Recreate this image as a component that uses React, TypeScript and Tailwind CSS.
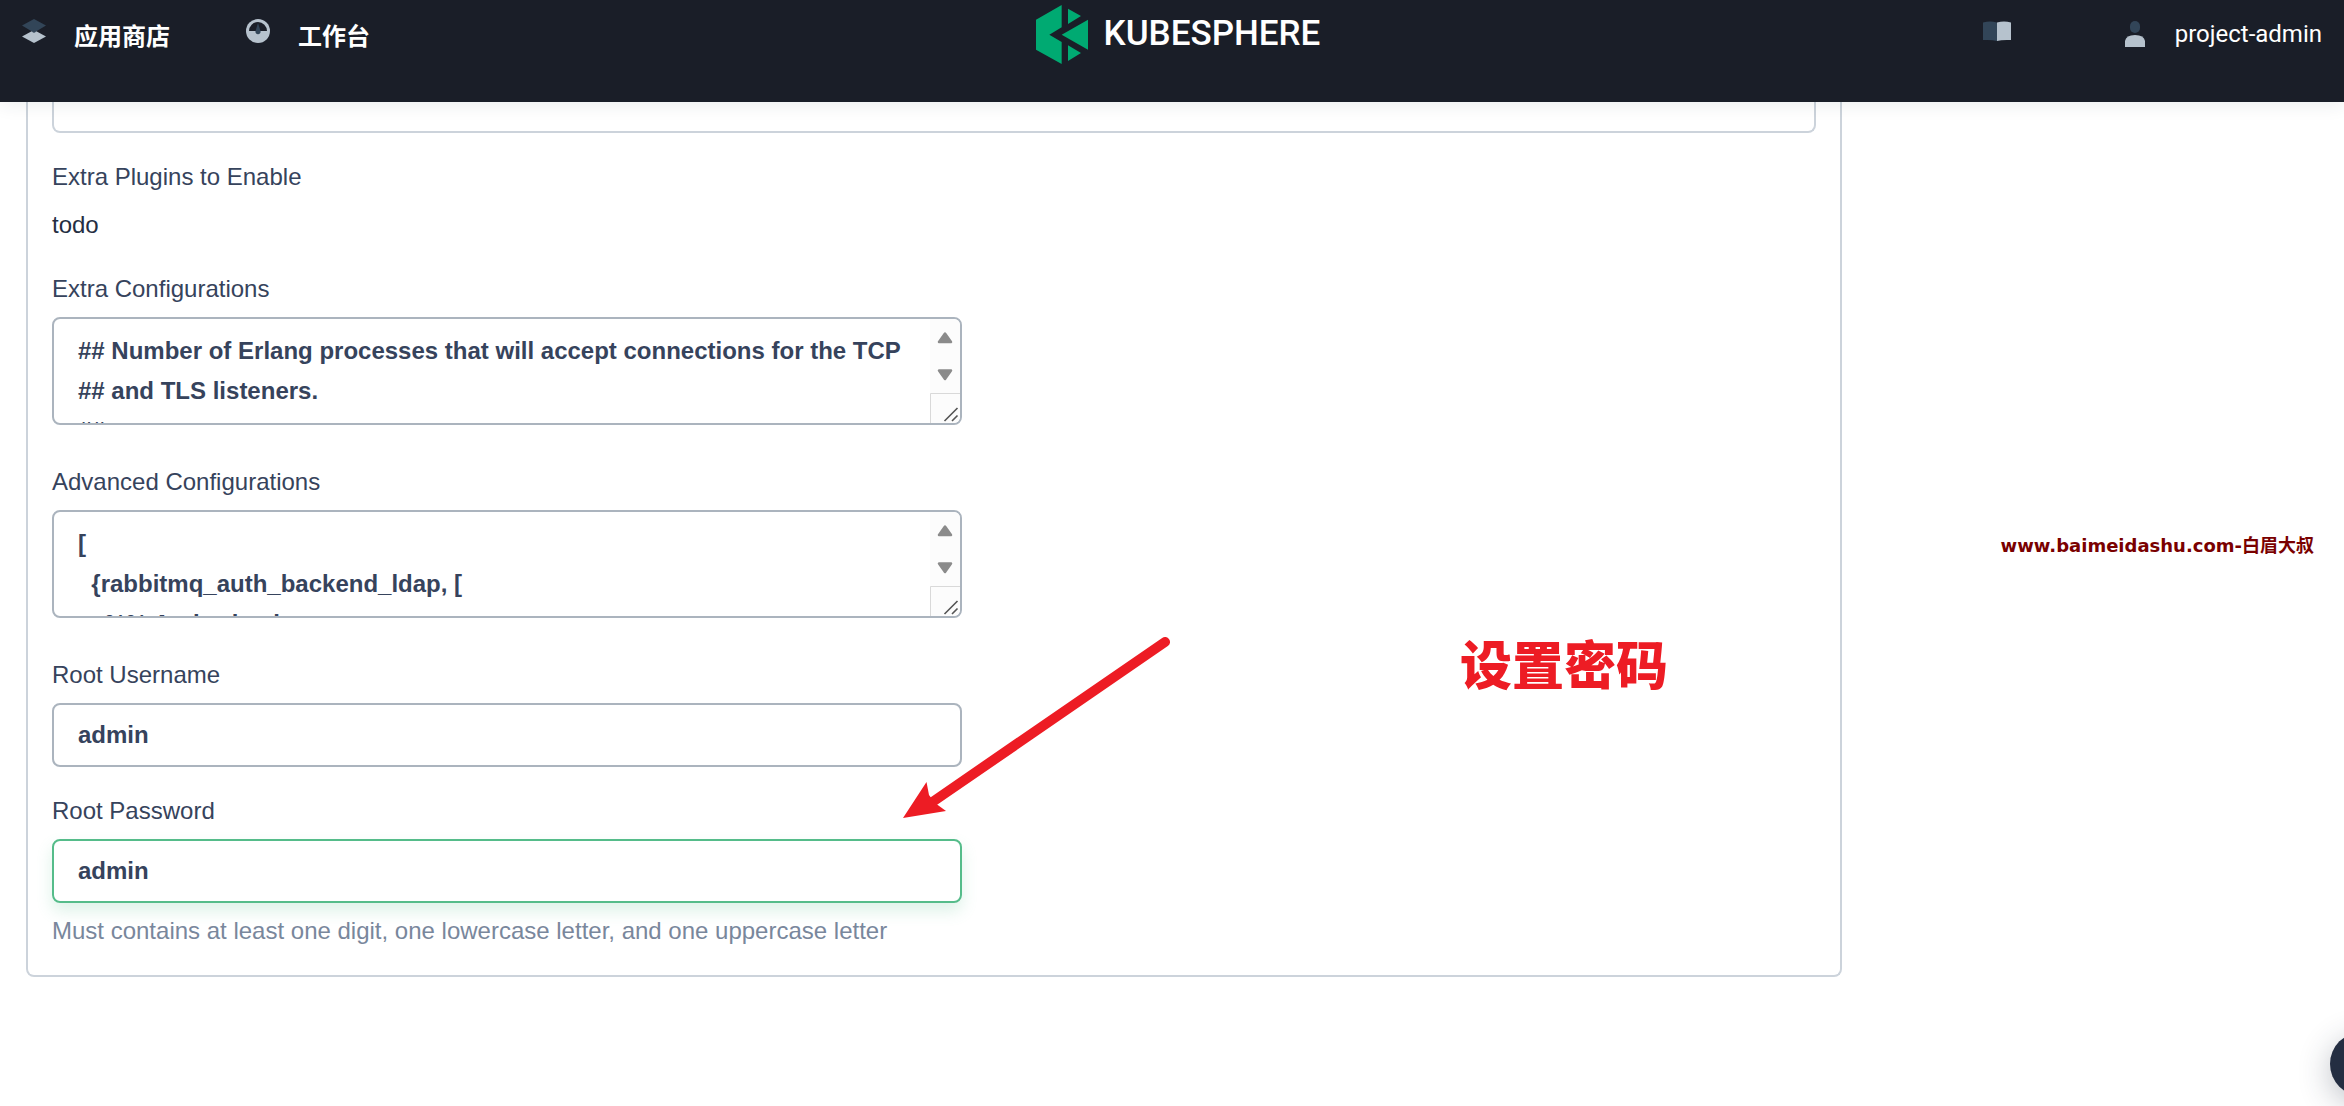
import { useState } from "react";
import type { ReactNode } from "react";

const EXTRA_CONFIG = `## Number of Erlang processes that will accept connections for the TCP
## and TLS listeners.
##`;

const ADVANCED_CONFIG = `[
  {rabbitmq_auth_backend_ldap, [
    %% Authorisation`;

export default function App() {
  return (
    <div className="relative min-h-screen overflow-hidden bg-white font-['Liberation_Sans','Noto_Sans_CJK_SC',sans-serif] text-2xl leading-10 text-[#36435c]">
      <Header />
      <main className="px-[26px]">
        <SettingsPanel />
      </main>
      <Annotations />
      <button aria-label="Toolbox" className="fixed -right-[50px] bottom-[10px] h-16 w-16 rounded-full bg-[#242e42] shadow-[0_8px_32px_rgba(36,46,66,0.3)]" />
    </div>
  );
}

function Header() {
  return (
    <header className="relative z-10 grid h-[102px] grid-cols-[1fr_auto_1fr] items-start bg-[#1a1e28] px-[22px] text-white shadow-[0_4px_16px_rgba(36,46,66,0.08)]">
      <nav className="flex gap-[76px] pt-[15px] font-['Noto_Sans_CJK_SC',sans-serif] font-bold">
        <a href="#apps" className="flex gap-7">
          <LayersIcon />
          应用商店
        </a>
        <a href="#workbench" className="flex gap-7">
          <GaugeIcon />
          工作台
        </a>
      </nav>
      <a href="#home" aria-label="KubeSphere" className="flex items-center gap-4 pt-1 pl-3">
        <LogoMark />
        <span className="font-['Roboto',sans-serif] text-[35px] leading-[60px] font-medium">KUBESPHERE</span>
      </a>
      <div className="flex justify-end gap-[114px] pt-3.5">
        <a href="#docs" aria-label="Documentation" className="pt-[7px]">
          <BookIcon />
        </a>
        <button className="flex gap-[30px] font-['Roboto',sans-serif]">
          <UserIcon />
          project-admin
        </button>
      </div>
    </header>
  );
}

function SettingsPanel() {
  const [username, setUsername] = useState("admin");
  const [password, setPassword] = useState("admin");

  return (
    <form className="max-w-[1816px] rounded-b-lg border-2 border-t-0 border-[#ccd3db] px-6 pb-6">
      <div className="h-[31px] rounded-b-lg border-2 border-t-0 border-[#ccd3db]" />
      <div className="mt-6 flex max-w-[910px] flex-col gap-6">
        <div className="flex flex-col gap-2">
          <div>Extra Plugins to Enable</div>
          <div className="text-[#242e42]">todo</div>
        </div>
        <Field id="extra" label="Extra Configurations">
          <CodeArea id="extra" value={EXTRA_CONFIG} />
        </Field>
        <Field id="advanced" label="Advanced Configurations">
          <CodeArea id="advanced" value={ADVANCED_CONFIG} />
        </Field>
        <Field id="username" label="Root Username">
          <input
            id="username"
            value={username}
            onChange={(e) => setUsername(e.target.value)}
            className="h-16 w-full rounded-lg border-2 border-[#abb4be] px-6 font-bold outline-none"
          />
        </Field>
        <Field id="password" label="Root Password">
          <input
            id="password"
            value={password}
            onChange={(e) => setPassword(e.target.value)}
            className="h-16 w-full rounded-lg border-2 border-[#55bc8a] px-6 font-bold shadow-[0_8px_16px_rgba(85,188,138,0.2)] outline-none"
          />
          <p className="relative text-[#79879c]">Must contains at least one digit, one lowercase letter, and one uppercase letter</p>
        </Field>
      </div>
    </form>
  );
}

function Field({ id, label, children }: { id: string; label: string; children: ReactNode }) {
  return (
    <div className="flex flex-col gap-2">
      <label htmlFor={id}>{label}</label>
      {children}
    </div>
  );
}

function CodeArea({ id, value }: { id: string; value: string }) {
  return (
    <div className="mb-[13px] flex h-[108px] overflow-hidden rounded-lg border-2 border-[#abb4be]">
      <textarea
        id={id}
        defaultValue={value}
        className="min-w-0 flex-1 resize-none py-3 pl-6 font-bold whitespace-pre outline-none [scrollbar-width:none]"
      />
      <svg viewBox="0 0 30 104" className="h-[104px] w-[30px] shrink-0">
        <rect width="30" height="104" fill="#fcfcfc" />
        <path d="M15 14.5 21 23H9z M9 51.5h12L15 60z" fill="#8b8b8b" stroke="#8b8b8b" strokeWidth="2.5" strokeLinejoin="round" />
        <path d="M.5 104V74.5H30" fill="none" stroke="#d9d9d9" />
        <path d="M14.500 102 27.500 89M22 102l5.500-5.500" stroke="#555" strokeWidth="1.6" />
      </svg>
    </div>
  );
}

// Red notes drawn over the page
function Annotations() {
  return (
    <>
      <svg viewBox="0 0 270 184" className="absolute top-[635px] left-[902px] z-20 h-[184px] w-[270px]" fill="#ed1c24">
        <path d="M263 7 29 168" stroke="#ed1c24" strokeWidth="10" strokeLinecap="round" />
        <path d="M1 183 24.500 147 27 160 33 168 44 176z" />
      </svg>
      <div className="absolute top-[637px] left-[1460px] font-['Noto_Sans_CJK_SC',sans-serif] text-[52px] leading-[52px] font-black text-[#ed1c24]">设置密码</div>
      <div className="absolute top-[526px] right-[30px] font-['DejaVu_Sans','Noto_Sans_CJK_SC',sans-serif] text-[18px] font-bold whitespace-nowrap text-[#7a0000]">
        www.baimeidashu.com-白眉大叔
      </div>
    </>
  );
}

function LayersIcon() {
  return (
    <svg viewBox="0 0 24 24" className="mt-1 h-6 w-6">
      <path d="M12 11 24 17.500 12 24 0 17.500z" fill="#b6c2cd" />
      <path d="M12 0 24 6.500 14 12.500Q12 15 10 12.500L0 6.500z" fill="#324558" />
    </svg>
  );
}

function GaugeIcon() {
  return (
    <svg viewBox="0 0 24 24" className="mt-1 h-6 w-6">
      <circle cx="12" cy="12" r="12" fill="#b6c2cd" />
      <path d="M3 12a9 9 0 0 1 18 0z" fill="#1a1e28" />
      <path d="M12 4 14.500 12a2.600 2.600 0 1 1-5 0z" fill="#324558" />
    </svg>
  );
}

function BookIcon() {
  return (
    <svg viewBox="0 0 28 20" className="h-5 w-7">
      <path d="M0 1.500Q7-.5 14 1.500V20Q9 18.500 0 19z" fill="#324558" />
      <path d="M28 1.500Q21-.5 14 1.500V20Q19 18.500 28 19z" fill="#b6c2cd" />
    </svg>
  );
}

function UserIcon() {
  return (
    <svg viewBox="0 0 20 26" className="mt-[7px] h-[26px] w-5">
      <rect x="5" width="10" height="12" rx="5" fill="#324558" />
      <path d="M0 26V20Q1 14 10 14T20 20V26z" fill="#b6c2cd" />
    </svg>
  );
}

function LogoMark() {
  return (
    <svg viewBox="0 0 156 177" className="h-[59px] w-[52px]" fill="#00aa72">
      <path d="M0 44 77 0V67L40 89 77 111V177L0 134z" />
      <path d="M77 89 156 44V134z M96 11 135 33 96 57z M96 121 135 144 96 168z" />
    </svg>
  );
}
